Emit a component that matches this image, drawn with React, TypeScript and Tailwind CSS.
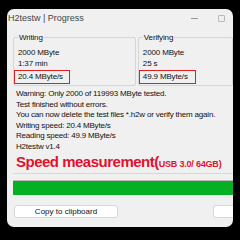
export default function App() {
  const font = { fontFamily: '"Liberation Sans", Arial, sans-serif' };
  return (
    <div className="w-[240px] h-[240px] bg-black pl-[7px] pt-[9px] overflow-hidden" style={font}>
      <div className="w-[226px] h-[218px] bg-[#f0f0f0] rounded-[7px] flex flex-col overflow-hidden">
        {/* title bar */}
        <div className="h-[19px] flex items-center justify-between shrink-0">
          <span className="text-[9px] text-[#444] pl-[1px] mt-[1px]">H2testw | Progress</span>
          <div className="flex items-center gap-[20px] pr-[8px]">
            <span className="w-[7px] h-px bg-[#999]" />
            <span className="w-[7px] h-[7px] border border-[#bbb] rounded-[1px]" />
          </div>
        </div>

        {/* group boxes */}
        <div className="flex gap-[2px] pl-[6px] mt-[4px] text-[8px] tracking-[-0.15px] text-[#111]">
          <Group label="Writing" w="w-[124px]" rows={["2000 MByte", "1:37 min"]} speed="20.4 MByte/s" boxW="w-[56px]" />
          <Group label="Verifying" w="w-[96px]" rows={["2000 MByte", "25 s"]} speed="49.9 MByte/s" boxW="w-[57px]" />
        </div>

        {/* messages */}
        <div className="pl-[9px] pt-[3px] text-[8px] tracking-[-0.2px] leading-[10.5px] text-[#111]">
          <p>Warning: Only 2000 of 119993 MByte tested.</p>
          <p>Test finished without errors.</p>
          <p className="whitespace-nowrap">You can now delete the test files *.h2w or verify them again.</p>
          <p>Writing speed: 20.4 MByte/s</p>
          <p>Reading speed: 49.9 MByte/s</p>
          <p>H2testw v1.4</p>
          <p className="mt-[2px] font-bold text-[#e2112e] whitespace-nowrap leading-[16px] tracking-normal">
            <span className="text-[15px] tracking-[-0.5px]">Speed measurement(</span>
            <span className="text-[9px] tracking-[-0.2px]">USB 3.0/ 64GB)</span>
          </p>
        </div>
        <div className="ml-[6px] mt-[0px] h-px bg-[#d8d8d8]" />

        {/* progress */}
        <div className="ml-[6px] mt-[6px] h-[15px] bg-[#e6e6e6] border-t border-[#bcbcbc]">
          <div className="h-full bg-[#06b025]" />
        </div>

        {/* buttons */}
        <div className="flex justify-between pl-[7px] mt-[10px]">
          <button className="w-[104px] h-[13px] bg-white border border-[#d8d8d8] rounded-[3px] text-[8px] text-[#111] leading-[11px]">
            Copy to clipboard
          </button>
          <button className="w-[20px] h-[13px] bg-white border border-[#d8d8d8] rounded-l-[3px] border-r-0" />
        </div>
      </div>
    </div>
  );
}

function Group({
  label,
  w,
  rows,
  speed,
  boxW,
}: {
  label: string;
  w: string;
  rows: string[];
  speed: string;
  boxW: string;
}) {
  return (
    <div className={`${w} relative border border-[#d5d5d5] rounded-[2px] h-[49px] mt-[5px] pl-[4px] pt-[9px]`}>
      <span className="absolute left-[4px] -top-[6px] bg-[#f0f0f0] px-px">{label}</span>
      <div className="leading-[11px]">
        {rows.map((r) => (
          <p key={r}>{r}</p>
        ))}
        <p className={`${boxW} -ml-[4px] pl-[3px] h-[14px] border-[1.5px] border-[#e02020] leading-[11px] mt-px`}>{speed}</p>
      </div>
    </div>
  );
}
